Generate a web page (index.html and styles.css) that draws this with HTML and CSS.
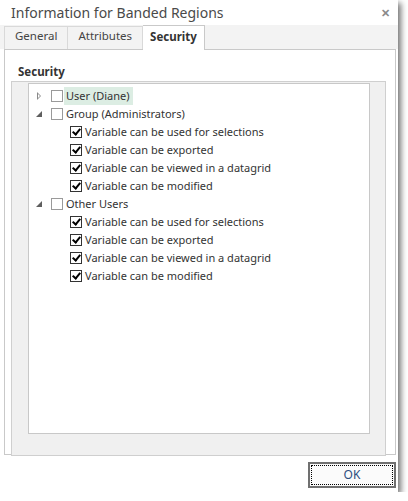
FILE: index.html
```html
<!DOCTYPE html>
<html lang="en">
<head>
    <meta charset="UTF-8">
    <title>Information for Banded Regions</title>
    <link rel="stylesheet" href="styles.css">
</head>
<body>
    <div class="window">
        <div class="titlebar">
            <span class="title">Information for Banded Regions</span>
            <span class="close">&#x2715;</span>
        </div>

        <div class="tabstrip">
            <div class="tab">General</div>
            <div class="tab">Attributes</div>
            <div class="tab active">Security</div>
        </div>

        <div class="panel">
            <div class="group-title">Security</div>
            <div class="group">
                <div class="tree">
                    <ul class="nodes">
                        <li>
                            <div class="row">
                                <span class="expander collapsed"></span>
                                <span class="check"></span>
                                <span class="label selected">User (Diane)</span>
                            </div>
                        </li>
                        <li>
                            <div class="row">
                                <span class="expander expanded"></span>
                                <span class="check"></span>
                                <span class="label">Group (Administrators)</span>
                            </div>
                            <ul class="nodes children">
                                <li><div class="row"><span class="expander"></span><span class="check on"></span><span class="label">Variable can be used for selections</span></div></li>
                                <li><div class="row"><span class="expander"></span><span class="check on"></span><span class="label">Variable can be exported</span></div></li>
                                <li><div class="row"><span class="expander"></span><span class="check on"></span><span class="label">Variable can be viewed in a datagrid</span></div></li>
                                <li><div class="row"><span class="expander"></span><span class="check on"></span><span class="label">Variable can be modified</span></div></li>
                            </ul>
                        </li>
                        <li>
                            <div class="row">
                                <span class="expander expanded"></span>
                                <span class="check"></span>
                                <span class="label">Other Users</span>
                            </div>
                            <ul class="nodes children">
                                <li><div class="row"><span class="expander"></span><span class="check on"></span><span class="label">Variable can be used for selections</span></div></li>
                                <li><div class="row"><span class="expander"></span><span class="check on"></span><span class="label">Variable can be exported</span></div></li>
                                <li><div class="row"><span class="expander"></span><span class="check on"></span><span class="label">Variable can be viewed in a datagrid</span></div></li>
                                <li><div class="row"><span class="expander"></span><span class="check on"></span><span class="label">Variable can be modified</span></div></li>
                            </ul>
                        </li>
                    </ul>
                </div>
            </div>
        </div>

        <div class="buttons">
            <button class="ok"><span class="focus">OK</span></button>
        </div>
    </div>
</body>
</html>
```

FILE: styles.css
```css
body {
    margin: 0;
    background: #ffffff;
    font-family: "Noto Sans", "Open Sans", sans-serif;
    font-size: 11px;
    color: #333333;
}

.window {
    width: 398px;
    height: 492px;
    background: #ffffff;
    box-shadow: 3px 3px 6px rgba(0, 0, 0, 0.55);
    display: flex;
    flex-direction: column;
}

.titlebar {
    height: 25px;
    display: flex;
    align-items: center;
    justify-content: space-between;
    padding: 0 8px 0 11px;
}

.title {
    font-size: 14px;
    color: #4a4a4a;
}

.close {
    font-size: 11px;
    font-weight: bold;
    color: #8a8a8a;
}

.tabstrip {
    height: 24px;
    background: #f3f3f3;
    display: flex;
    align-items: flex-end;
    padding-left: 4px;
}

.tab {
    height: 22px;
    line-height: 18px;
    padding: 0 10px;
    border: 1px solid #d9d9d9;
    border-bottom: none;
    border-left: none;
    color: #444444;
    font-size: 11.5px;
}

.tab:first-child {
    border-left: 1px solid #d9d9d9;
}

.tab.active {
    height: 24px;
    line-height: 21px;
    padding: 0 7px;
    background: #ffffff;
    font-weight: bold;
    color: #333333;
    margin-bottom: -1px;
    position: relative;
    border-color: #c9c9c9;
}

.panel {
    margin: 0 2px 0 4px;
    height: 404px;
    border: 1px solid #c9c9c9;
    padding: 0 9px 0 6px;
}

.group-title {
    font-weight: bold;
    padding: 13px 0 0 7px;
    height: 18px;
    line-height: 18px;
    font-size: 11.5px;
}

.group {
    height: 360px;
    background: #f0f0f0;
    border: 1px solid #cfcfcf;
    padding: 1px 15px 12px 16px;
}

.tree {
    height: 346px;
    background: #ffffff;
    border: 1px solid #c8c8c8;
    padding-top: 3px;
}

.nodes {
    list-style: none;
    margin: 0;
    padding: 0 0 0 3px;
}

.nodes.children {
    padding-left: 19px;
}

.row {
    height: 18px;
    display: flex;
    align-items: center;
}

.expander {
    width: 19px;
    height: 18px;
    position: relative;
    flex: none;
}

.expander.collapsed::before {
    content: "";
    position: absolute;
    left: 5px;
    top: 5px;
    border-left: 4px solid #8a8a8a;
    border-top: 4px solid transparent;
    border-bottom: 4px solid transparent;
}

.expander.collapsed::after {
    content: "";
    position: absolute;
    left: 6px;
    top: 7px;
    border-left: 2px solid #ffffff;
    border-top: 2px solid transparent;
    border-bottom: 2px solid transparent;
}

.expander.expanded::before {
    content: "";
    position: absolute;
    left: 4px;
    top: 6px;
    border-right: 6px solid #5f5f5f;
    border-top: 6px solid transparent;
}

.check {
    width: 10px;
    height: 10px;
    border: 1px solid #9a9a9a;
    background: #ffffff;
    flex: none;
    margin-right: 1px;
    position: relative;
}

.check.on {
    border-color: #333333;
}

.check.on::after {
    content: "";
    position: absolute;
    left: 3px;
    top: 0px;
    width: 3px;
    height: 6px;
    border-right: 2px solid #000000;
    border-bottom: 2px solid #000000;
    transform: rotate(40deg);
}

.label {
    height: 18px;
    line-height: 18px;
    padding: 0 3px 0 2px;
    white-space: nowrap;
}

.label.selected {
    background: #dcede3;
}

.buttons {
    flex: 1;
    display: flex;
    justify-content: flex-end;
    align-items: center;
    padding: 2px 2px 0 0;
}

.ok {
    width: 88px;
    height: 26px;
    border: 2px solid #707070;
    background: #fbfbfb;
    padding: 1px;
    font-family: "Noto Sans", "Open Sans", sans-serif;
    font-size: 12px;
    color: #2f4f7f;
}

.focus {
    display: block;
    height: 18px;
    line-height: 18px;
    border: 1px dotted #000000;
}
```
